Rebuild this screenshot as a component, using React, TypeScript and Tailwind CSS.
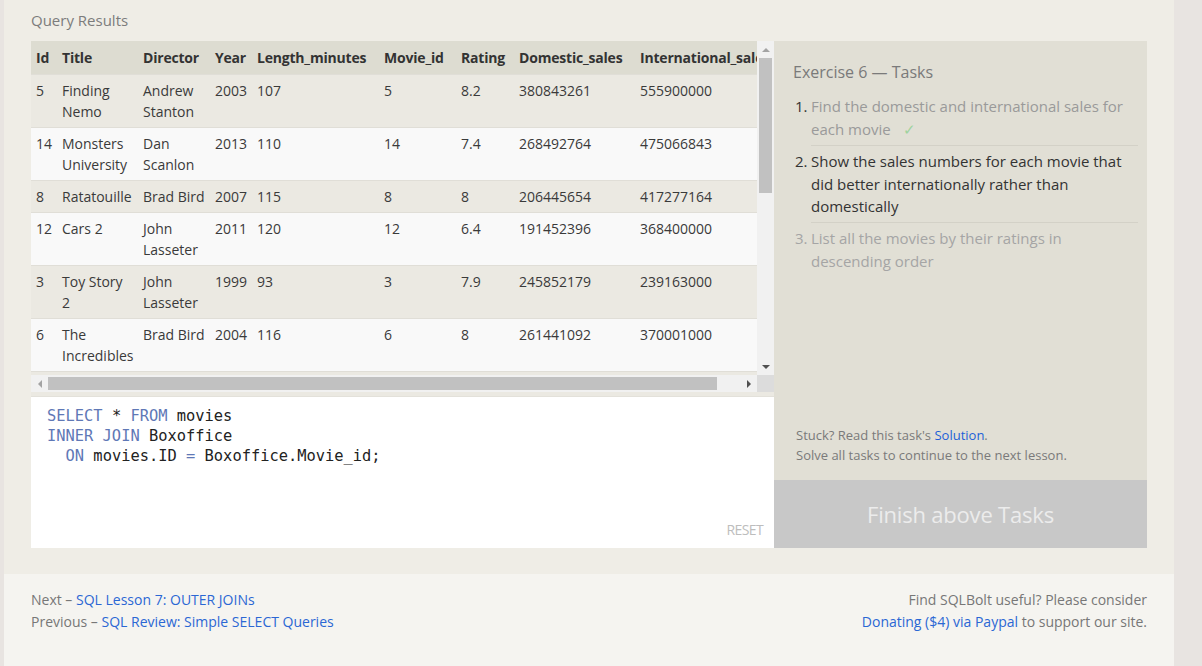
import React from "react";

type Row = string[];

const headers = [
  "Id",
  "Title",
  "Director",
  "Year",
  "Length_minutes",
  "Movie_id",
  "Rating",
  "Domestic_sales",
  "International_sales",
];

const widths = [26, 81, 72, 42, 127, 77, 58, 121, 160];

const rows: Row[] = [
  ["5", "Finding Nemo", "Andrew Stanton", "2003", "107", "5", "8.2", "380843261", "555900000"],
  ["14", "Monsters University", "Dan Scanlon", "2013", "110", "14", "7.4", "268492764", "475066843"],
  ["8", "Ratatouille", "Brad Bird", "2007", "115", "8", "8", "206445654", "417277164"],
  ["12", "Cars 2", "John Lasseter", "2011", "120", "12", "6.4", "191452396", "368400000"],
  ["3", "Toy Story 2", "John Lasseter", "1999", "93", "3", "7.9", "245852179", "239163000"],
  ["6", "The Incredibles", "Brad Bird", "2004", "116", "6", "8", "261441092", "370001000"],
  ["9", "WALL-E", "Andrew Stanton", "2008", "104", "9", "8.5", "223808164", "297503696"],
];

function ResultsTable() {
  return (
    <div className="flex flex-col w-[743px] h-[356px] bg-[#ebe9e2]">
      <div className="flex h-[334px]">
        <div className="w-[726px] h-[334px] overflow-hidden">
          <table className="table-fixed border-collapse w-[764px] text-[14px] leading-[21px] text-[#3a3a3a]">
            <colgroup>
              {widths.map((w, i) => (
                <col key={i} style={{ width: w }} />
              ))}
            </colgroup>
            <thead>
              <tr className="bg-[#dddcd1]">
                {headers.map((h) => (
                  <th
                    key={h}
                    className="text-left font-bold whitespace-nowrap pl-[5px] pr-[4px] pt-[6px] pb-[6px] text-[#333] overflow-hidden tracking-[-0.2px]"
                  >
                    {h}
                  </th>
                ))}
              </tr>
            </thead>
            <tbody>
              {rows.map((r, i) => (
                <tr
                  key={i}
                  className={
                    i % 2 === 0
                      ? "bg-[#ebe9e2] border-t border-[#e0ded7]"
                      : "bg-[#f9f9f9] border-t border-[#e0ded7]"
                  }
                >
                  {r.map((c, j) => (
                    <td key={j} className="align-top pl-[5px] pr-[4px] pt-[5px] pb-[5px]">
                      {c}
                    </td>
                  ))}
                </tr>
              ))}
            </tbody>
          </table>
        </div>
        {/* vertical scrollbar */}
        <div className="w-[17px] h-[334px] bg-[#f1f1f1] flex flex-col items-center">
          <div className="h-[17px] w-[17px] flex items-center justify-center">
            <div className="w-0 h-0 border-l-[4px] border-r-[4px] border-b-[4px] border-l-transparent border-r-transparent border-b-[#a3a3a3]" />
          </div>
          <div className="w-[13px] h-[135px] bg-[#c1c1c1]" />
          <div className="flex-1" />
          <div className="h-[17px] w-[17px] flex items-center justify-center">
            <div className="w-0 h-0 border-l-[4px] border-r-[4px] border-t-[4px] border-l-transparent border-r-transparent border-t-[#505050]" />
          </div>
        </div>
      </div>
      {/* horizontal scrollbar */}
      <div className="flex h-[17px]">
        <div className="w-[726px] h-[17px] bg-[#f1f1f1] flex items-center">
          <div className="w-[17px] h-[17px] flex items-center justify-center">
            <div className="w-0 h-0 border-t-[4px] border-b-[4px] border-r-[4px] border-t-transparent border-b-transparent border-r-[#a3a3a3]" />
          </div>
          <div className="w-[669px] h-[13px] bg-[#c1c1c1]" />
          <div className="flex-1" />
          <div className="w-[17px] h-[17px] flex items-center justify-center">
            <div className="w-0 h-0 border-t-[4px] border-b-[4px] border-l-[4px] border-t-transparent border-b-transparent border-l-[#505050]" />
          </div>
        </div>
        <div className="w-[17px] h-[17px] bg-[#dcdcdc]" />
      </div>
      <div className="h-[5px] bg-[#ebe9e2] border-b border-[#e3e1da]" />
    </div>
  );
}

function Editor() {
  const kw = "text-[#5f78b6]";
  return (
    <div className="relative w-[743px] h-[151px] bg-white">
      <pre
        className="pt-[9px] px-[16px] text-[15.4px] leading-[20px] text-[#222] m-0"
        style={{ fontFamily: '"DejaVu Sans Mono", "Liberation Mono", monospace' }}
      >
        <span className={kw}>SELECT</span> * <span className={kw}>FROM</span> movies{"\n"}
        <span className={kw}>INNER JOIN</span> Boxoffice{"\n"}
        {"  "}
        <span className={kw}>ON</span> movies.ID <span className={kw}>=</span> Boxoffice.Movie_id;
      </pre>
      <div className="absolute right-[11px] bottom-[9px] text-[14px] leading-[18px] text-[#bdbdbd] tracking-[-0.6px]">
        RESET
      </div>
    </div>
  );
}

function TaskPanel() {
  return (
    <div className="w-[373px] h-[507px] flex flex-col bg-[#e1dfd5]">
      <div className="flex-1 flex flex-col pl-[19px] pr-[9px] pt-[20px]">
        <div className="text-[16px] leading-[22px] text-[#7a7a7a]">Exercise 6 — Tasks</div>
        <div className="mt-[12px] text-[15px] leading-[23px]">
          <div className="flex">
            <div className="w-[18px] pl-[2px] text-[#333]">1.</div>
            <div className="flex-1 pb-[4px] border-b border-[#d3d1c7] text-[#9a9a9a]">
              Find the domestic and international sales for each movie
              <span className="ml-[12px] text-[#9ed39e]">✓</span>
            </div>
          </div>
          <div className="flex pt-[4px]">
            <div className="w-[18px] pl-[2px] text-[#333]">2.</div>
            <div className="flex-1 pb-[4px] border-b border-[#d3d1c7] text-[#333] leading-[22.5px]">
              Show the sales numbers for each movie that did better internationally rather than
              domestically
            </div>
          </div>
          <div className="flex pt-[4px]">
            <div className="w-[18px] pl-[2px] text-[#a5a5a5]">3.</div>
            <div className="flex-1 text-[#a5a5a5]">
              List all the movies by their ratings in descending order
            </div>
          </div>
        </div>
        <div className="flex-1" />
        <div className="pl-[3px] pb-[15px] text-[13px] leading-[20px] text-[#7a7a7a]">
          <div>
            Stuck? Read this task's <span className="text-[#1d5fd8]">Solution</span>.
          </div>
          <div>Solve all tasks to continue to the next lesson.</div>
        </div>
      </div>
      <div className="h-[68px] bg-[#c8c8c8] flex items-center justify-center text-[22px] text-[#ececec] tracking-[-0.2px]">
        Finish above Tasks
      </div>
    </div>
  );
}

export default function App() {
  return (
    <div
      className="w-full min-h-[666px] bg-[#e8e4e1] flex"
      style={{ fontFamily: '"Open Sans", "Noto Sans", sans-serif' }}
    >
      <div className="ml-[4px] w-[1170px] flex flex-col">
        <div className="bg-[#efede6] px-[27px] pt-[9px] pb-[26px]">
          <div className="text-[15px] leading-[22px] text-[#7c7c7c] mb-[10px]">Query Results</div>
          <div className="flex">
            <div className="flex flex-col">
              <ResultsTable />
              <Editor />
            </div>
            <TaskPanel />
          </div>
        </div>
        <div className="flex-1 bg-[#f5f4f0] px-[27px] pt-[15px] flex justify-between text-[14px] leading-[22px] text-[#777]">
          <div>
            <div>
              Next – <span className="text-[#2b67d4]">SQL Lesson 7: OUTER JOINs</span>
            </div>
            <div>
              Previous – <span className="text-[#2b67d4]">SQL Review: Simple SELECT Queries</span>
            </div>
          </div>
          <div className="text-right pr-[-1px]">
            <div>Find SQLBolt useful? Please consider</div>
            <div>
              <span className="text-[#2b67d4]">Donating ($4) via Paypal</span> to support our site.
            </div>
          </div>
        </div>
      </div>
    </div>
  );
}
